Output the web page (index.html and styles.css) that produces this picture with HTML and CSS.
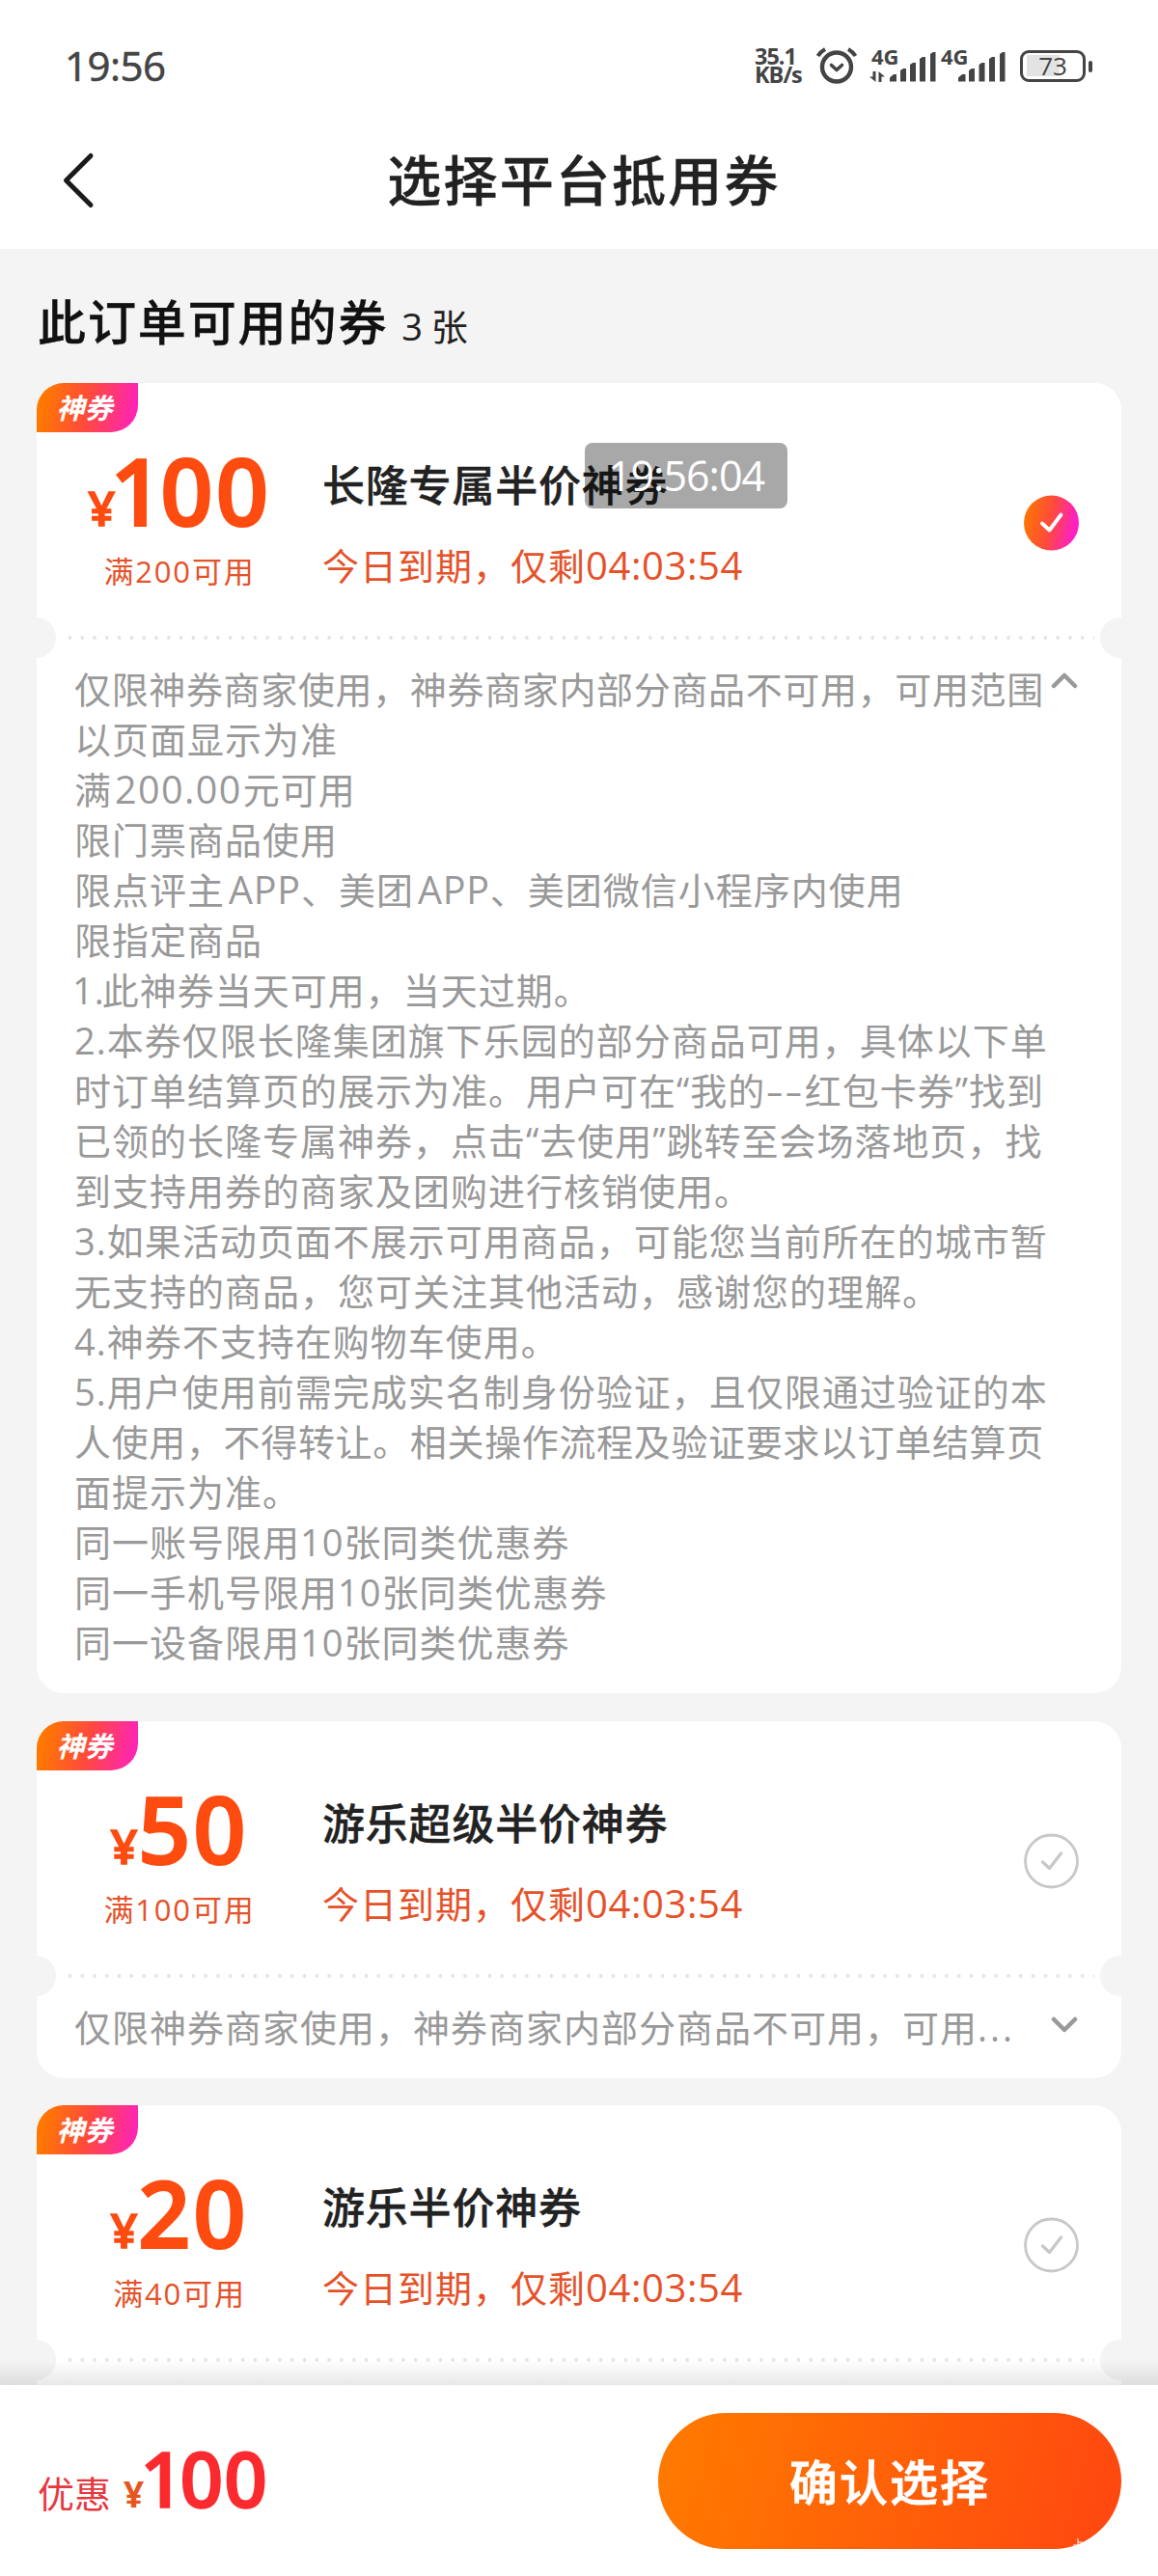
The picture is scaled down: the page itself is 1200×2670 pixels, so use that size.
FILE: index.html
```html
<!DOCTYPE html>
<html lang="zh-CN">
<head>
    <meta charset="UTF-8">
    <meta name="viewport" content="width=device-width, initial-scale=1.0">
    <title>选择平台抵用券</title>
    <link rel="stylesheet" href="styles.css">
</head>
<body>
    <div class="page">
        <header class="header">
            <div class="status-bar">
                <span class="clock">19:56</span>
                <div class="status-icons">
                    <div class="net-speed"><span>35.1</span><span>KB/s</span></div>
                    <svg class="alarm" width="44" height="40" viewBox="0 0 44 40" fill="none" stroke="#444" stroke-linecap="round">
                        <circle cx="22" cy="21.5" r="15" stroke-width="4.4"/>
                        <path d="M16.5 19.5l5.5 5 5.5-5" stroke-width="3.6" stroke-linejoin="round"/>
                        <path d="M2.5 10q3-4.500 7.500-7M41.500 10q-3-4.500-7.500-7" stroke-width="4" stroke-linecap="butt"/>
                    </svg>
                    <svg class="signal" width="70" height="40" viewBox="0 0 70 40" fill="#444">
                        <text class="signal-text" x="3" y="19">4G</text>
                        <path d="M4.500 26h3v11L1 31.500h3.500zM10.500 37h3v-5.500H17L10.500 26z"/>
                        <path d="M22 36.500v-4l4-3.500h3v7.500zM33 36.500V25l3-2h3v13.500zM43 36.500V19l3-2h3v19.500zM53 36.500V13l3-2h3v25.500zM64 36.500V8l3-2h2.500v30.500z"/>
                    </svg>
                    <svg class="signal" width="68" height="40" viewBox="0 0 68 40" fill="#444">
                        <text class="signal-text" x="1" y="19">4G</text>
                        <path d="M19 36.500v-4l4-3.500h3.500v7.500zM30 36.500V25l3-2h3v13.500zM40.500 36.500V19l3-2h3v19.500zM51 36.500V13l3-2h3v25.500zM62 36.500V8l3-2h2.500v30.500z"/>
                    </svg>
                    <div class="battery"><span>73</span></div>
                </div>
            </div>
            <div class="nav-bar">
                <svg class="back" width="36" height="60" viewBox="0 0 36 60" fill="none" stroke="#1a1a1a" stroke-width="5" stroke-linecap="round" stroke-linejoin="round">
                    <path d="M30 4.500L4.500 30 30 55.500"/>
                </svg>
                <h1>选择平台抵用券</h1>
            </div>
        </header>

        <main class="content">
            <h2>此订单可用的券 <small>3 张</small></h2>

            <section class="coupon">
                <span class="tag">神券</span>
                <div class="coupon-top">
                    <div class="amount">
                        <div class="price"><i>¥</i><span class="one">1</span>00</div>
                        <div class="condition">满200可用</div>
                    </div>
                    <div class="info">
                        <h3>长隆专属半价神券</h3>
                        <p>今日到期，仅剩<b>04:03:54</b></p>
                    </div>
                    <svg class="check" width="57" height="58" viewBox="0 0 57 58" fill="none">
                        <defs>
                            <linearGradient id="checkFill" x1="0" y1="0" x2="1" y2="0.2">
                                <stop offset="0.05" stop-color="#ff7900"/>
                                <stop offset="0.55" stop-color="#ff4a3c"/>
                                <stop offset="1" stop-color="#ff20c4"/>
                            </linearGradient>
                        </defs>
                        <circle cx="28.500" cy="29" r="28.500" fill="url(#checkFill)"/>
                        <path d="M19 29.500l7.500 7L38.500 20.500" stroke="#fff" stroke-width="3.800" stroke-linecap="round" stroke-linejoin="round"/>
                    </svg>
                </div>
                <div class="divider"></div>
                <div class="rules">
                    <div class="rules-text">
                        <p class="tight">仅限神券商家使用，神券商家内部分商品不可用，可用范围</p>
                        <p>以页面显示为准</p>
                        <p>满<span class="num">200.00</span>元可用</p>
                        <p>限门票商品使用</p>
                        <p>限点评主<span class="latin">APP</span>、美团<span class="latin">APP</span>、美团微信小程序内使用</p>
                        <p>限指定商品</p>
                        <p><span class="first">1.</span>此神券当天可用，当天过期。</p>
                        <p>2.本券仅限长隆集团旗下乐园的部分商品可用，具体以下单</p>
                        <p>时订单结算页的展示为准。用户可在“我的<span class="dash">--</span>红包卡券”找到</p>
                        <p>已领的长隆专属神券，点击“去使用”跳转至会场落地页，找</p>
                        <p>到支持用券的商家及团购进行核销使用。</p>
                        <p>3.如果活动页面不展示可用商品，可能您当前所在的城市暂</p>
                        <p>无支持的商品，您可关注其他活动，感谢您的理解。</p>
                        <p>4.神券不支持在购物车使用。</p>
                        <p>5.用户使用前需完成实名制身份验证，且仅限通过验证的本</p>
                        <p class="tight">人使用，不得转让。相关操作流程及验证要求以订单结算页</p>
                        <p>面提示为准。</p>
                        <p>同一账号限用10张同类优惠券</p>
                        <p>同一手机号限用10张同类优惠券</p>
                        <p>同一设备限用10张同类优惠券</p>
                    </div>
                    <svg class="arrow" width="28" height="18" viewBox="0 0 28 18" fill="none" stroke="#999" stroke-width="4.500" stroke-linecap="round" stroke-linejoin="round">
                        <path d="M3 15L14 4l11 11"/>
                    </svg>
                </div>
            </section>

            <section class="coupon">
                <span class="tag">神券</span>
                <div class="coupon-top">
                    <div class="amount">
                        <div class="price"><i>¥</i>50</div>
                        <div class="condition">满100可用</div>
                    </div>
                    <div class="info">
                        <h3>游乐超级半价神券</h3>
                        <p>今日到期，仅剩<b>04:03:54</b></p>
                    </div>
                    <svg class="check" width="57" height="58" viewBox="0 0 57 58" fill="none" stroke="#c8c8c8">
                        <circle cx="28.500" cy="29" r="27" stroke-width="2.800"/>
                        <path d="M19.500 30l7 6.500L38.500 21" stroke-width="3.300" stroke-linecap="round" stroke-linejoin="round"/>
                    </svg>
                </div>
                <div class="divider"></div>
                <div class="rules">
                    <div class="rules-text">
                        <p>仅限神券商家使用，神券商家内部分商品不可用，可用<span class="dots">...</span></p>
                    </div>
                    <svg class="arrow down" width="28" height="18" viewBox="0 0 28 18" fill="none" stroke="#999" stroke-width="4.500" stroke-linecap="round" stroke-linejoin="round">
                        <path d="M3 3l11 11L25 3"/>
                    </svg>
                </div>
            </section>

            <section class="coupon last">
                <span class="tag">神券</span>
                <div class="coupon-top">
                    <div class="amount">
                        <div class="price"><i>¥</i>20</div>
                        <div class="condition">满40可用</div>
                    </div>
                    <div class="info">
                        <h3>游乐半价神券</h3>
                        <p>今日到期，仅剩<b>04:03:54</b></p>
                    </div>
                    <svg class="check" width="57" height="58" viewBox="0 0 57 58" fill="none" stroke="#c8c8c8">
                        <circle cx="28.500" cy="29" r="27" stroke-width="2.800"/>
                        <path d="M19.500 30l7 6.500L38.500 21" stroke-width="3.300" stroke-linecap="round" stroke-linejoin="round"/>
                    </svg>
                </div>
                <div class="divider"></div>
            </section>
        </main>

        <footer class="footer">
            <div class="discount">
                <span>优惠</span>
                <i>¥</i>
                <strong><em>1</em>00</strong>
            </div>
            <button class="confirm">确认选择
                <svg class="mark" width="14" height="10" viewBox="0 0 14 10" fill="none" stroke="#fff" stroke-width="1">
                    <path d="M5 0v10M5 4h5M0 7h13"/>
                </svg>
            </button>
        </footer>

        <!-- floating clock -->
        <div class="float-clock">19:56:04</div>
    </div>
</body>
</html>
```
FILE: styles.css
```css
html, body {
    margin: 0;
    padding: 0;
}
body {
    font-family: "Open Sans", "Noto Sans CJK SC", sans-serif;
    background-color: #f4f4f4;
    color: #222;
}
h1, h2, h3, p {
    margin: 0;
    font-weight: 500;
}
h1, h2, h3 {
    -webkit-text-stroke: 0.4px currentColor;
}
i, em {
    font-style: normal;
}
.page {
    position: relative;
    display: flex;
    flex-direction: column;
    width: 1200px;
    height: 2670px;
    overflow: hidden;
}

/* Header */
.header {
    height: 258px;
    background: #fff;
}
.status-bar {
    display: flex;
    justify-content: space-between;
    align-items: center;
    height: 136px;
    padding: 0 68px 0 67px;
    color: #444;
}
.clock {
    margin-top: -2px;
    font-size: 42px;
    font-weight: 500;
    letter-spacing: -0.5px;
    -webkit-text-stroke: 0.6px #444;
}
.status-icons {
    display: flex;
    align-items: center;
}
.net-speed {
    display: flex;
    flex-direction: column;
    width: 52px;
    margin-right: 2px;
    font-size: 23.500px;
    line-height: 19px;
    font-weight: 700;
    letter-spacing: -1px;
}
.alarm {
    margin-left: 9px;
}
.signal {
    margin-left: 11px;
    overflow: visible;
}
.signal + .signal {
    margin-left: 4px;
}
.signal-text {
    font-size: 22px;
    font-weight: 700;
}
.battery {
    position: relative;
    box-sizing: border-box;
    width: 68px;
    height: 33px;
    margin: 0 7px 0 15px;
    border: 3px solid #444;
    border-radius: 9px;
    background: linear-gradient(#e3e3e3, #e3e3e3) 4px center / 34px 22px no-repeat;
    font-size: 26px;
    line-height: 27px;
    text-align: center;
}
.battery::after {
    content: "";
    position: absolute;
    right: -10px;
    top: 8px;
    width: 4px;
    height: 12px;
    border-radius: 2px;
    background: #444;
}
.nav-bar {
    display: flex;
    align-items: center;
    height: 102px;
    padding: 0 64px;
}
.back {
    flex: none;
}
h1 {
    flex: 1;
    padding: 0 26px 2px 0;
    font-size: 56px;
    line-height: 80px;
    letter-spacing: 2.2px;
    text-align: center;
}

/* Coupon list */
.content {
    flex: 1;
    min-height: 0;
    padding: 0 38px;
    overflow: hidden;
}
h2 {
    height: 139px;
    padding-left: 1px;
    font-size: 50px;
    line-height: 152px;
    letter-spacing: 1.900px;
    color: #111;
    box-sizing: border-box;
    white-space: nowrap;
}
h2 small {
    font-size: 38px;
    font-weight: 400;
    letter-spacing: -0.5px;
    color: #222;
    margin-left: -1px;
    -webkit-text-stroke: 0;
}
.coupon {
    position: relative;
    margin-bottom: 29px;
    border-radius: 28px;
    background: #fff;
}
.coupon + .coupon {
    margin-bottom: 28px;
}
.tag {
    position: absolute;
    left: 0;
    top: 0;
    box-sizing: border-box;
    width: 105px;
    height: 51px;
    padding-right: 6px;
    border-radius: 28px 0 28px 0;
    background: linear-gradient(100deg, #ff7900 8%, #ff4a3c 50%, #ff20c4 100%);
    color: #fff;
    font-size: 29px;
    line-height: 51px;
    font-weight: 700;
    font-style: italic;
    text-align: center;
}
.coupon-top {
    display: flex;
    height: 263px;
    box-sizing: border-box;
    padding: 70px 44px 0 36px;
}
.amount {
    width: 224px;
    text-align: center;
    color: #fe4b10;
}
.price {
    height: 80px;
    font-size: 96px;
    line-height: 82px;
    font-weight: 600;
    letter-spacing: 2.500px;
    white-space: nowrap;
    -webkit-text-stroke: 2px currentColor;
}
.price i {
    font-size: 49px;
    letter-spacing: 0;
    -webkit-text-stroke: 1.500px currentColor;
}
.price .one {
    margin-left: -5px;
    letter-spacing: -3px;
}
.condition {
    margin-top: 25px;
    font-size: 31px;
    line-height: 40px;
    letter-spacing: 1.800px;
    color: #e5522a;
}
.info {
    flex: 1;
    padding: 6px 0 0 36px;
}
h3 {
    font-size: 44px;
    line-height: 60px;
    letter-spacing: 0.800px;
}
.info p {
    margin-top: 28px;
    font-size: 38px;
    line-height: 50px;
    font-weight: 400;
    letter-spacing: 1px;
    color: #e5522a;
}
.info b {
    font-size: 40px;
    font-weight: 400;
    letter-spacing: 0.600px;
}
.check {
    margin-top: 46px;
}
.divider {
    position: relative;
    height: 4px;
    margin: -1px 28px -1px;
    background: radial-gradient(circle, #e3e3e3 1.600px, transparent 2.200px) 0 0 / 12.800px 4px repeat-x;
}
.divider::before,
.divider::after {
    content: "";
    position: absolute;
    top: -19px;
    width: 42px;
    height: 42px;
    border-radius: 50%;
    background: #f4f4f4;
}
.divider::before {
    left: -50px;
}
.divider::after {
    right: -48px;
}
.rules {
    display: flex;
    justify-content: space-between;
    padding: 26px 45px 27px 39px;
}
.rules-text {
    width: 1010px;
    font-size: 38px;
    line-height: 52px;
    letter-spacing: 1px;
    color: #999;
    white-space: nowrap;
}
.rules-text p {
    height: 52px;
    font-weight: 400;
}
.rules-text .tight {
    letter-spacing: 0.650px;
}
.num {
    margin: 0 1px 0 3px;
    font-size: 39.500px;
    letter-spacing: 1.400px;
}
.latin {
    margin: 0 0 0 4px;
    font-size: 39.500px;
    letter-spacing: 0.800px;
}
.first {
    margin: 0 -3px 0 -2px;
}
/* the two hyphens are drawn wider than the font has them */
.dash {
    display: inline-block;
    margin: 0 7px;
    letter-spacing: 1px;
    transform: scaleX(1.5);
}
.dots {
    letter-spacing: 3px;
}
.arrow {
    flex: none;
    margin-top: 8px;
}
.arrow.down {
    margin-top: 15px;
}
.last {
    height: 400px;
}

/* Bottom bar */
.footer {
    position: relative;
    display: flex;
    justify-content: space-between;
    height: 198px;
    box-sizing: border-box;
    padding: 29px 38px 0 39px;
    background: #fff;
}
.footer::before {
    content: "";
    position: absolute;
    left: 0;
    top: -26px;
    width: 100%;
    height: 26px;
    background: linear-gradient(rgba(0, 0, 0, 0), rgba(0, 0, 0, 0.09));
}
.discount {
    display: flex;
    align-items: baseline;
    line-height: 136px;
    color: #fb2a2e;
}
.discount span {
    font-size: 38px;
    color: #e6383f;
}
.discount i {
    margin-left: 13px;
    font-size: 37px;
    font-weight: 700;
    color: #ea5420;
}
.discount strong {
    font-size: 79px;
    font-weight: 600;
    letter-spacing: 0.5px;
    -webkit-text-stroke: 1.500px currentColor;
}
.discount em {
    margin-left: -4px;
    letter-spacing: -4px;
}
.confirm {
    position: relative;
    width: 480px;
    height: 141px;
    padding: 0 0 2px;
    border: none;
    border-radius: 71px;
    background: linear-gradient(105deg, #ff7900 5%, #ff4810 97%);
    color: #fff;
    font-family: inherit;
    font-size: 50px;
    font-weight: 500;
    letter-spacing: 2px;
    -webkit-text-stroke: 0.8px #fff;
}
.mark {
    position: absolute;
    right: 36px;
    bottom: 1px;
}

.float-clock {
    position: absolute;
    left: 606px;
    top: 459px;
    width: 210px;
    height: 68px;
    border-radius: 8px;
    background: rgba(0, 0, 0, 0.34);
    color: #fff;
    font-size: 43px;
    font-weight: 500;
    line-height: 68px;
    letter-spacing: -1px;
    text-align: center;
}
```
